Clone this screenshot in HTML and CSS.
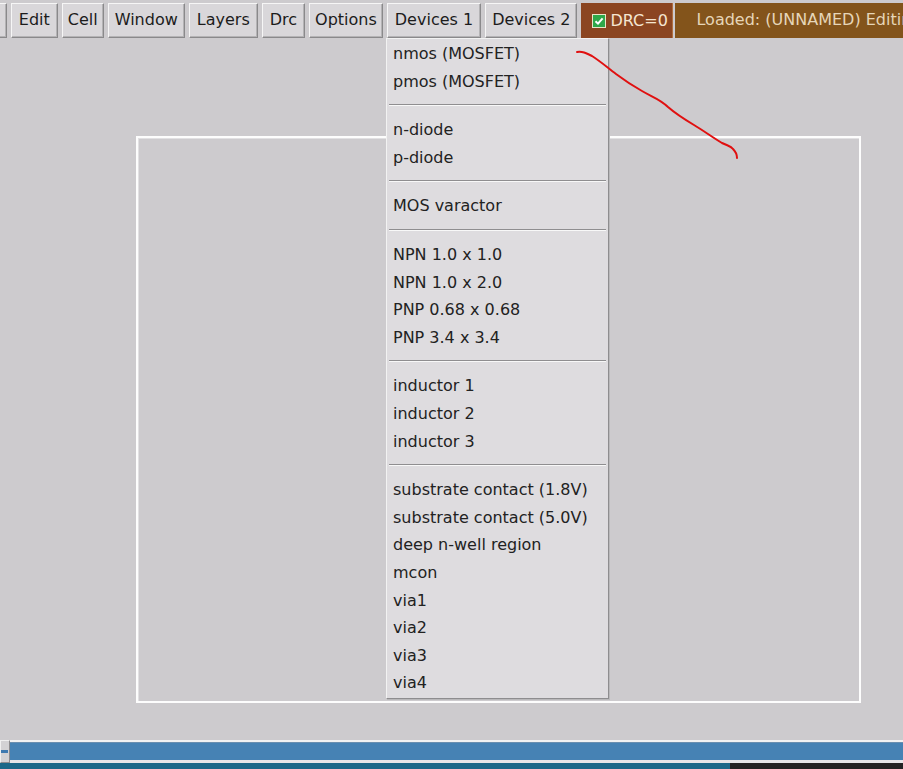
FILE: index.html
```html
<!DOCTYPE html>
<html>
<head>
<meta charset="utf-8">
<link rel="stylesheet" href="styles.css">
</head>
<body>
<div class="app">
  <div class="menubar">
    <div class="mbtn">File</div>
    <div class="mbtn mid">Edit</div>
    <div class="mbtn tight">Cell</div>
    <div class="mbtn">Window</div>
    <div class="mbtn mid">Layers</div>
    <div class="mbtn mid">Drc</div>
    <div class="mbtn tight">Options</div>
    <div class="mbtn mid">Devices 1</div>
    <div class="mbtn">Devices 2</div>
    <div class="drc"><span class="check"><svg width="12" height="12" viewBox="0 0 12 12"><rect width="12" height="12" fill="#2ea84a"/><path d="M2.5 6.2 L5 8.6 L9.6 3.4" stroke="#fff" stroke-width="2" fill="none"/></svg></span>DRC=0</div>
    <div class="loaded">Loaded: (UNNAMED) Editing</div>
  </div>
  <div class="main">
    <div class="frame"></div>
  </div>
  <div class="status">
    <div class="sbtn"><span class="mark"></span></div>
    <div class="sbar"></div>
  </div>
  <div class="taskbar">
    <div class="task"></div>
    <div class="rest"></div>
  </div>

  <div class="menu">
    <div class="item">nmos (MOSFET)</div>
    <div class="item">pmos (MOSFET)</div>
    <div class="sep"></div>
    <div class="item">n-diode</div>
    <div class="item">p-diode</div>
    <div class="sep"></div>
    <div class="item">MOS varactor</div>
    <div class="sep"></div>
    <div class="item">NPN 1.0 x 1.0</div>
    <div class="item">NPN 1.0 x 2.0</div>
    <div class="item">PNP 0.68 x 0.68</div>
    <div class="item">PNP 3.4 x 3.4</div>
    <div class="sep"></div>
    <div class="item">inductor 1</div>
    <div class="item">inductor 2</div>
    <div class="item">inductor 3</div>
    <div class="sep"></div>
    <div class="item">substrate contact (1.8V)</div>
    <div class="item">substrate contact (5.0V)</div>
    <div class="item">deep n-well region</div>
    <div class="item">mcon</div>
    <div class="item">via1</div>
    <div class="item">via2</div>
    <div class="item">via3</div>
    <div class="item">via4</div>
  </div>

  <svg class="scribble" width="903" height="769" viewBox="0 0 903 769">
    <path d="M577 52 C 582 51, 586 53, 592 56 C 600 61, 608 68, 616 74 C 624 80, 633 86, 642 91 C 652 97, 660 99, 668 107 C 676 114, 684 119, 694 125 C 704 131, 712 137, 722 143 C 728 146, 731 146, 733 149 C 735 151, 737 153, 737 158" stroke="#e01010" stroke-width="2" fill="none" stroke-linecap="round"/>
  </svg>
</div>
</body>
</html>
```

FILE: styles.css
```css
html, body {
  margin: 0;
  padding: 0;
}
body {
  background: #cdcbce;
  font-family: "DejaVu Sans", "Noto Sans", sans-serif;
  font-size: 16px;
  color: #1c1c1c;
  width: 903px;
  height: 769px;
  overflow: hidden;
}
.app {
  position: relative;
  width: 903px;
  height: 769px;
  display: flex;
  flex-direction: column;
  overflow: hidden;
}
.menubar {
  display: flex;
  gap: 4px;
  height: 35px;
  margin-top: 3px;
  margin-left: -34px;
  flex: none;
  white-space: nowrap;
}
.mbtn {
  box-sizing: border-box;
  height: 35px;
  padding: 0 6px;
  line-height: 32px;
  background: #d9d7da;
  border: 1px solid;
  border-color: #f6f6f6 #8a898b #8a898b #f6f6f6;
  box-shadow: inset -1px -1px 0 #b4b3b5;
}
.mbtn.mid {
  padding: 0 7px;
}
.mbtn.tight {
  padding: 0 5px;
}
.drc {
  box-sizing: border-box;
  flex: none;
  width: 92px;
  height: 35px;
  background: #8b4521;
  color: #f5e6d2;
  display: flex;
  align-items: center;
  padding-left: 12px;
  gap: 5px;
  border-right: 1px solid #b07040;
}
.check {
  display: flex;
  width: 12px;
  height: 12px;
  outline: 1px solid #e8e8c8;
}
.loaded {
  flex: none;
  height: 35px;
  line-height: 34px;
  margin-left: -2px;
  padding-left: 21px;
  background: #83541b;
  color: #e6d6b8;
  width: 300px;
}
.main {
  flex: 1;
  display: flex;
  align-items: flex-start;
}
.frame {
  box-sizing: border-box;
  margin-top: 98px;
  margin-left: 136px;
  width: 725px;
  height: 567px;
  border: 2px solid #fdfdfd;
  box-shadow: inset 1px 1px 0 #e2e1e3;
}
.status {
  flex: none;
  height: 23px;
  display: flex;
}
.sbtn {
  width: 10px;
  height: 23px;
  box-sizing: border-box;
  background: #d3d2d4;
  border: 1px solid #f0f0f0;
  border-right-color: #8d8c8e;
  border-bottom-color: #8d8c8e;
  display: flex;
  align-items: center;
}
.mark {
  display: block;
  width: 7px;
  height: 3px;
  background: #3f7ab0;
}
.sbar {
  flex: 1;
  box-sizing: border-box;
  height: 23px;
  background: #4682b4;
  border-top: 2px solid #f2f2f2;
  border-bottom: 3px solid #e6e6e8;
  box-shadow: inset 0 1px 0 #6a8fb0;
}
.taskbar {
  flex: none;
  height: 6px;
  display: flex;
}
.task {
  width: 730px;
  background: #1b6888;
}
.rest {
  flex: 1;
  background: #232323;
}
.menu {
  position: absolute;
  left: 386px;
  top: 38px;
  width: 223px;
  box-sizing: border-box;
  background: #dedcdf;
  border: 1px solid;
  border-color: #f2f2f2 #8e8d8f #8e8d8f #f2f2f2;
  padding: 1px 0 1px 6px;
  box-shadow: 1px 1px 0 #b9b8ba;
}
.item {
  height: 27.6px;
  line-height: 28px;
  white-space: nowrap;
  color: #222;
}
.sep {
  height: 21px;
  position: relative;
  margin-left: -4px;
  margin-right: 2px;
}
.sep::before {
  content: "";
  position: absolute;
  left: 0;
  right: 0;
  top: 9px;
  height: 1px;
  background: #8f8e90;
  border-bottom: 1px solid #f8f8f8;
}
.scribble {
  position: absolute;
  left: 0;
  top: 0;
  pointer-events: none;
}
```
